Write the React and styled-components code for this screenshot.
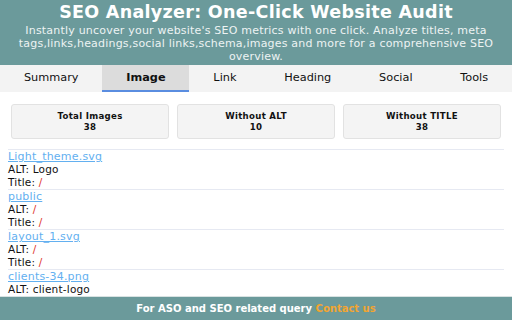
import React from 'react'
import styled, { createGlobalStyle } from 'styled-components'

const Global = createGlobalStyle`
  html, body { margin: 0; padding: 0; }
  body { font-family: "DejaVu Sans", Verdana, sans-serif; background: #fff; }
`

const Page = styled.div`
  width: 512px;
  height: 320px;
  display: flex;
  flex-direction: column;
  overflow: hidden;
`

const Header = styled.header`
  background: #6b9a9b;
  color: #fff;
  text-align: center;
  padding: 0 4px 2px;
  height: 65px;
  box-sizing: border-box;
`

const Title = styled.h1`
  margin: 0;
  font-size: 17.5px;
  letter-spacing: 0.3px;
  line-height: 24px;
  font-weight: bold;
`

const Sub = styled.p`
  margin: 0;
  font-size: 11px;
  letter-spacing: 0.2px;
  line-height: 13px;
  color: #edf3f3;
`

const Tabs = styled.nav`
  display: flex;
  background: #f3f3f3;
  height: 27px;
`

const Tab = styled.div`
  flex: 1 1 auto;
  text-align: center;
  font-size: 11.3px;
  line-height: 25px;
  color: #111;
  font-weight: ${p => (p.$active ? 'bold' : 'normal')};
  background: ${p => (p.$active ? '#dcdcdc' : 'transparent')};
  border-bottom: 2px solid ${p => (p.$active ? '#5a8de0' : 'transparent')};
`

const Body = styled.main`
  flex: 1;
  overflow: hidden;
  padding: 12px 8px 0;
`

const Stats = styled.div`
  display: grid;
  grid-template-columns: repeat(3, 1fr);
  gap: 8px;
  padding: 0 3px;
  margin-bottom: 10px;
`

const Card = styled.div`
  background: #f4f4f4;
  border: 1px solid #e2e2e2;
  border-radius: 3px;
  height: 33px;
  display: flex;
  flex-direction: column;
  justify-content: center;
  align-items: center;
  font-size: 8.6px;
  letter-spacing: 0.3px;
  line-height: 11px;
  font-weight: bold;
  color: #111;
`

const Item = styled.div`
  border-top: 1px solid #e6e9f2;
  font-size: 10.5px;
  letter-spacing: 0.2px;
  line-height: 13px;
  color: #111;
`

const FileLink = styled.a`
  display: block;
  color: #63b0f0;
  text-decoration: underline;
  font-size: 11px;
`

const Slash = styled.span`
  color: #e0352b;
`

const Footer = styled.footer`
  background: #6b9a9b;
  height: 23px;
  border-top: 1px solid #d8e2e2;
  text-align: center;
  font-size: 10px;
  line-height: 23px;
  font-weight: bold;
  color: #fff;
`

const Contact = styled.span`
  color: #f2a531;
`

const tabs = ['Summary', 'Image', 'Link', 'Heading', 'Social', 'Tools']

const stats = [
  { label: 'Total Images', value: 38 },
  { label: 'Without ALT', value: 10 },
  { label: 'Without TITLE', value: 38 },
]

const images = [
  { src: 'Light_theme.svg', alt: 'Logo', title: null },
  { src: 'public', alt: null, title: null },
  { src: 'layout_1.svg', alt: null, title: null },
  { src: 'clients-34.png', alt: 'client-logo', title: null },
]

const show = v => (v ? v : <Slash>/</Slash>)

export default function App() {
  return (
    <Page>
      <Global />
      <Header>
        <Title>SEO Analyzer: One-Click Website Audit</Title>
        <Sub>
          Instantly uncover your website's SEO metrics with one click. Analyze titles, meta
          tags,links,headings,social links,schema,images and more for a comprehensive SEO
          overview.
        </Sub>
      </Header>
      <Tabs>
        {tabs.map(t => (
          <Tab key={t} $active={t === 'Image'}>{t}</Tab>
        ))}
      </Tabs>
      <Body>
        <Stats>
          {stats.map(s => (
            <Card key={s.label}>
              <div>{s.label}</div>
              <div>{s.value}</div>
            </Card>
          ))}
        </Stats>
        {images.map(img => (
          <Item key={img.src}>
            <FileLink href="#">{img.src}</FileLink>
            <div>ALT: {show(img.alt)}</div>
            <div>Title: {show(img.title)}</div>
          </Item>
        ))}
      </Body>
      <Footer>
        For ASO and SEO related query <Contact>Contact us</Contact>
      </Footer>
    </Page>
  )
}
